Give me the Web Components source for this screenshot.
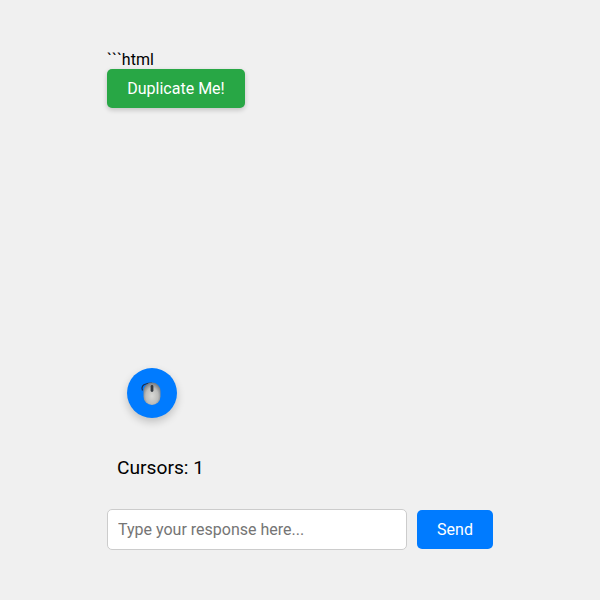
<!DOCTYPE html>
<html>
<head>
<meta charset="utf-8">
<style>
  html, body { margin: 0; height: 100%; background: #f0f0f0; }
  body { font-family: Roboto, "Liberation Sans", sans-serif; color: #000; }
</style>
</head>
<body>
<game-page>
  <span slot="intro">```html</span>
  <dup-button slot="top">Duplicate Me!</dup-button>
  <cursor-fab slot="fab"></cursor-fab>
  <cursor-count slot="count" value="1"></cursor-count>
  <response-bar slot="bar"></response-bar>
</game-page>
<script>
class GamePage extends HTMLElement {
  constructor() {
    super()
    this.attachShadow({mode: 'open'})
    this.shadowRoot.innerHTML = `<style>
      :host { display: block; height: 600px; box-sizing: border-box; padding: 50px 107px 0; }
      .wrap { display: flex; flex-direction: column; align-items: flex-start; }
      .intro { font-size: 16px; line-height: 19px; }
      .gap { height: 260px; }
      .fab { margin-left: 20px; }
      .count { margin: 38px 0 0 10px; }
      .bar { margin-top: 30px; }
    </style>
    <div class="wrap">
      <div class="intro"><slot name="intro"></slot></div>
      <slot name="top"></slot>
      <div class="gap"></div>
      <div class="fab"><slot name="fab"></slot></div>
      <div class="count"><slot name="count"></slot></div>
      <div class="bar"><slot name="bar"></slot></div>
    </div>`
  }
}

class DupButton extends HTMLElement {
  constructor() {
    super()
    this.attachShadow({mode: 'open'})
    this.shadowRoot.innerHTML = `<style>
      :host { display: block; }
      button {
        display: block; width: 138px; height: 39px; padding: 0; border: 0; border-radius: 5px;
        background: #28a745; color: #fff; font: 16px Roboto, sans-serif;
        box-shadow: 0 2px 5px rgba(0,0,0,.2);
      }
    </style><button><slot></slot></button>`
  }
}

class CursorFab extends HTMLElement {
  constructor() {
    super()
    this.attachShadow({mode: 'open'})
    this.shadowRoot.innerHTML = `<style>
      :host {
        display: flex; align-items: center; justify-content: center;
        width: 50px; height: 50px; border-radius: 50%;
        background: #007bff; box-shadow: 0 4px 8px rgba(0,0,0,.2);
      }
      svg { display: block; }
    </style>
    <svg width="26" height="30" viewBox="0 0 26 30">
      <defs>
        <radialGradient id="shell" cx=".5" cy=".6" r=".6">
          <stop offset="0" stop-color="#d9d9d6"/>
          <stop offset=".6" stop-color="#bdbdbb"/>
          <stop offset="1" stop-color="#74787e"/>
        </radialGradient>
      </defs>
      <path d="M3.5 12.5C2 9 4 6.5 7 6C10 5.5 11 5 13 5" fill="none" stroke="#1c2f50" stroke-width="1.2"/>
      <rect x="4.5" y="4.5" width="17" height="22.5" rx="8.5" fill="url(#shell)"/>
      <rect x="11.6" y="7" width="2.8" height="7" rx="1.4" fill="#33383f"/>
    </svg>`
  }
}

class CursorCount extends HTMLElement {
  constructor() {
    super()
    this.attachShadow({mode: 'open'})
    this.shadowRoot.innerHTML = `<style>
      :host { display: block; font-size: 19.2px; line-height: 23px; }
    </style><span></span>`
  }
  connectedCallback() {
    this.shadowRoot.querySelector('span').textContent = 'Cursors: ' + this.getAttribute('value')
  }
}

class ResponseBar extends HTMLElement {
  constructor() {
    super()
    this.attachShadow({mode: 'open'})
    this.shadowRoot.innerHTML = `<style>
      :host { display: flex; align-items: center; gap: 10px; }
      input {
        box-sizing: border-box; width: 300px; height: 41px; padding: 0 10px;
        border: 1px solid #ccc; border-radius: 5px; background: #fff;
        font: 16px Roboto, sans-serif; outline: 0;
      }
      input::placeholder { color: #757575; }
      button {
        width: 76px; height: 39px; padding: 0; border: 0; border-radius: 5px;
        background: #007bff; color: #fff; font: 16px Roboto, sans-serif;
      }
    </style>
    <input placeholder="Type your response here...">
    <button>Send</button>`
  }
}

customElements.define('game-page', GamePage)
customElements.define('dup-button', DupButton)
customElements.define('cursor-fab', CursorFab)
customElements.define('cursor-count', CursorCount)
customElements.define('response-bar', ResponseBar)
</script>
</body>
</html>
